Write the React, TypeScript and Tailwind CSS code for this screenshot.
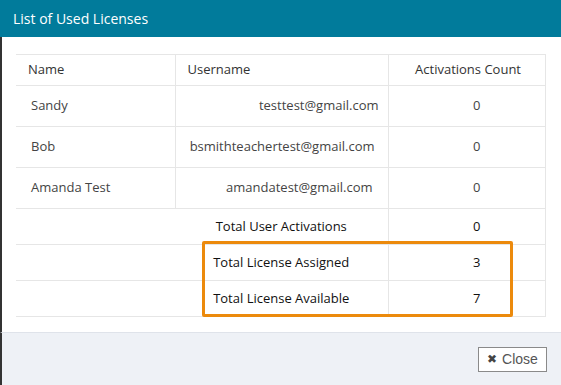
import React from 'react';

const users = [
  { name: 'Sandy', username: 'testtest@gmail.com', count: 0, pad: 'pr-[9px]' },
  { name: 'Bob', username: 'bsmithteachertest@gmail.com', count: 0, pad: 'pr-[13px]' },
  { name: 'Amanda Test', username: 'amandatest@gmail.com', count: 0, pad: 'pr-[15px]' }
];

const totals = [
  { label: 'Total User Activations', value: 0 },
  { label: 'Total License Assigned', value: 3 },
  { label: 'Total License Available', value: 7 }
];

const App = () => {
  return (
    <div className="w-[561px] h-[385px] flex flex-col overflow-hidden font-['Open_Sans',sans-serif] text-[#333]">
      <div className="h-[37px] shrink-0 bg-[#017b9b] flex items-center px-[13px] pt-[1px]">
        <h1 className="text-white text-[14px] leading-none">List of Used Licenses</h1>
      </div>

      <div className="flex-1 bg-white border-l-2 border-[#333] pl-[14px] pt-[17px]">
        <div className="relative w-[530px]">
          <table className="w-full border-collapse text-[13px] border-r border-[#e6e6e6]">
            <thead>
              <tr className="h-[31px] border-t border-b border-[#e6e6e6]">
                <th className="w-[159px] text-left font-normal pl-[12px] border-r border-[#e6e6e6]">Name</th>
                <th className="w-[213px] text-left font-normal pl-[12px] border-r border-[#e6e6e6]">Username</th>
                <th className="text-right font-normal pr-[24px]">Activations Count</th>
              </tr>
            </thead>
            <tbody>
              {users.map((u) => (
                <tr key={u.name} className="h-[41px] border-b border-[#e6e6e6] text-[#444]">
                  <td className="pl-[15px] border-r border-[#e6e6e6]">{u.name}</td>
                  <td className={`text-right border-r border-[#e6e6e6] ${u.pad}`}>{u.username}</td>
                  <td className="text-center pl-[20px]">{u.count}</td>
                </tr>
              ))}
              {totals.map((t) => (
                <tr key={t.label} className="h-[36px] border-b border-[#e6e6e6] text-[#111]">
                  <td></td>
                  <td className="text-center font-medium border-r border-[#e6e6e6]">{t.label}</td>
                  <td className="text-center font-medium pl-[20px]">{t.value}</td>
                </tr>
              ))}
            </tbody>
          </table>
          <div className="absolute left-[186px] top-[187px] w-[311px] h-[76px] border-[3px] border-[#ec8a0c] rounded-[2px] pointer-events-none"></div>
        </div>
      </div>

      <div className="h-[53px] shrink-0 bg-[#eef1f6] border-t border-[#dfe3ea] border-l-2 border-l-[#333] flex items-center justify-end pr-[14px]">
        <button className="h-[25px] w-[69px] bg-white border border-[#8a8a8a] flex items-center justify-center gap-[5px] font-['Liberation_Sans',sans-serif] text-[14px] text-[#555]">
          <span className="text-[12px] text-[#444] leading-none">✖</span>
          Close
        </button>
      </div>
    </div>
  );
};

export default App;
